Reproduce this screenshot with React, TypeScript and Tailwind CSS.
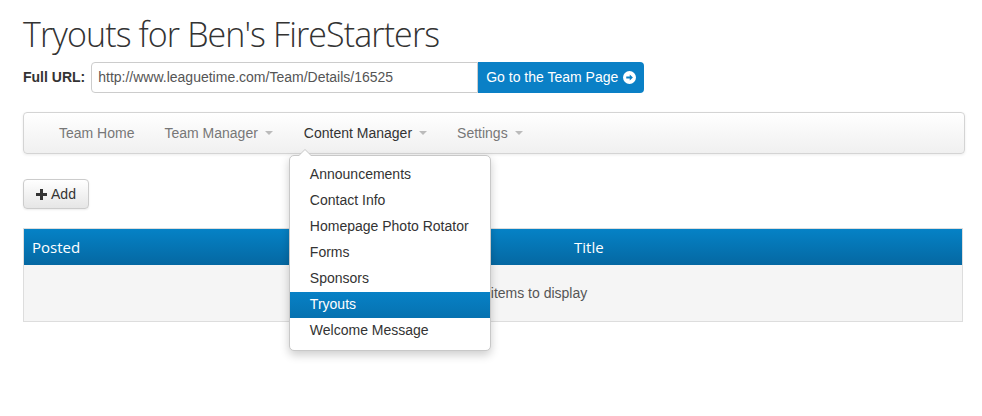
import React from "react";

function Caret() {
  return (
    <span className="ml-[7px] inline-block h-0 w-0 border-x-[4px] border-t-[4px] border-x-transparent border-t-[#bbb] align-middle" />
  );
}

export default function App() {
  const items = [
    "Announcements",
    "Contact Info",
    "Homepage Photo Rotator",
    "Forms",
    "Sponsors",
    "Tryouts",
    "Welcome Message",
  ];
  return (
    <div className="h-[416px] w-[982px] overflow-hidden bg-white pl-[23px] pr-[17px] font-['Liberation_Sans',Arial,sans-serif]">
      <h1 className="pt-[14px] font-['Open_Sans',sans-serif] text-[34px] font-light leading-[40px] tracking-[-0.9px] text-[#333]">
        Tryouts for Ben's FireStarters
      </h1>
      <div className="mt-[8px] flex items-center">
        <span className="mr-[6px] text-[14px] font-bold text-[#333]">Full URL:</span>
        <div className="flex h-[31px] w-[387px] items-center rounded-l-[4px] border border-[#ccc] px-[6px] text-[14px] text-[#555]">
          http://www.leaguetime.com/Team/Details/16525
        </div>
        <button className="flex h-[31px] items-center gap-[5px] rounded-r-[4px] bg-[#0a80c6] pl-[8px] pr-[8px] text-[14px] text-white">
          Go to the Team Page
          <svg width="13" height="13" viewBox="0 0 16 16">
            <circle cx="8" cy="8" r="8" fill="#fff" />
            <path d="M4 6.7h4.3V4.2L12.2 8l-3.9 3.8V9.3H4z" fill="#0a80c6" />
          </svg>
        </button>
      </div>
      <div className="mt-[19px] flex h-[42px] w-[942px] items-center rounded-[4px] border border-[#d4d4d4] bg-gradient-to-b from-white to-[#f0f0f0] pl-[35px] text-[14px] shadow-[0_1px_3px_rgba(0,0,0,0.08)]">
        <span className="text-[#777]">Team Home</span>
        <span className="ml-[30px] flex items-center text-[#777]">
          Team Manager
          <Caret />
        </span>
        <div className="relative ml-[31px]">
          <span className="flex items-center text-[#333]">
            Content Manager
            <Caret />
          </span>
          <div className="absolute left-[-15px] top-[32px] z-10 w-[202px] rounded-[5px] border border-[#c8c8c8] bg-white py-[6px] shadow-[0_4px_10px_rgba(0,0,0,0.2)]">
            <div className="absolute left-[8px] top-[-7px] h-0 w-0 border-x-[7px] border-b-[7px] border-x-transparent border-b-[#c8c8c8]" />
            <div className="absolute left-[9px] top-[-6px] h-0 w-0 border-x-[6px] border-b-[6px] border-x-transparent border-b-white" />
            {items.map((it) => (
              <div
                key={it}
                className={`flex h-[26px] items-center px-[20px] text-[14px] ${it === "Tryouts" ? "bg-gradient-to-b from-[#0781c6] to-[#0672b0] text-white" : "text-[#333]"}`}
              >
                {it}
              </div>
            ))}
          </div>
        </div>
        <span className="ml-[30px] flex items-center text-[#777]">
          Settings
          <Caret />
        </span>
      </div>
      <button className="mt-[25px] flex h-[30px] w-[66px] items-center justify-center gap-[4px] rounded-[4px] border border-[#ccc] bg-gradient-to-b from-white to-[#e6e6e6] text-[14px] text-[#333] shadow-[0_1px_2px_rgba(0,0,0,0.08)]">
        <svg width="11" height="11" viewBox="0 0 11 11">
          <path d="M4 0h3v4h4v3H7v4H4V7H0V4h4z" fill="#333" />
        </svg>
        Add
      </button>
      <div className="mt-[19px] w-[940px] border border-[#ddd]">
        <div className="flex h-[36px] items-center bg-gradient-to-b from-[#0582c6] to-[#0568a2] font-['Open_Sans',sans-serif] text-[15px] text-white">
          <span className="w-[550px] pl-[8px]">Posted</span>
          <span>Title</span>
        </div>
        <div className="flex h-[56px] items-center bg-[#f5f5f5] pl-[445px] text-[14px] text-[#555]">
          No items to display
        </div>
      </div>
    </div>
  );
}
